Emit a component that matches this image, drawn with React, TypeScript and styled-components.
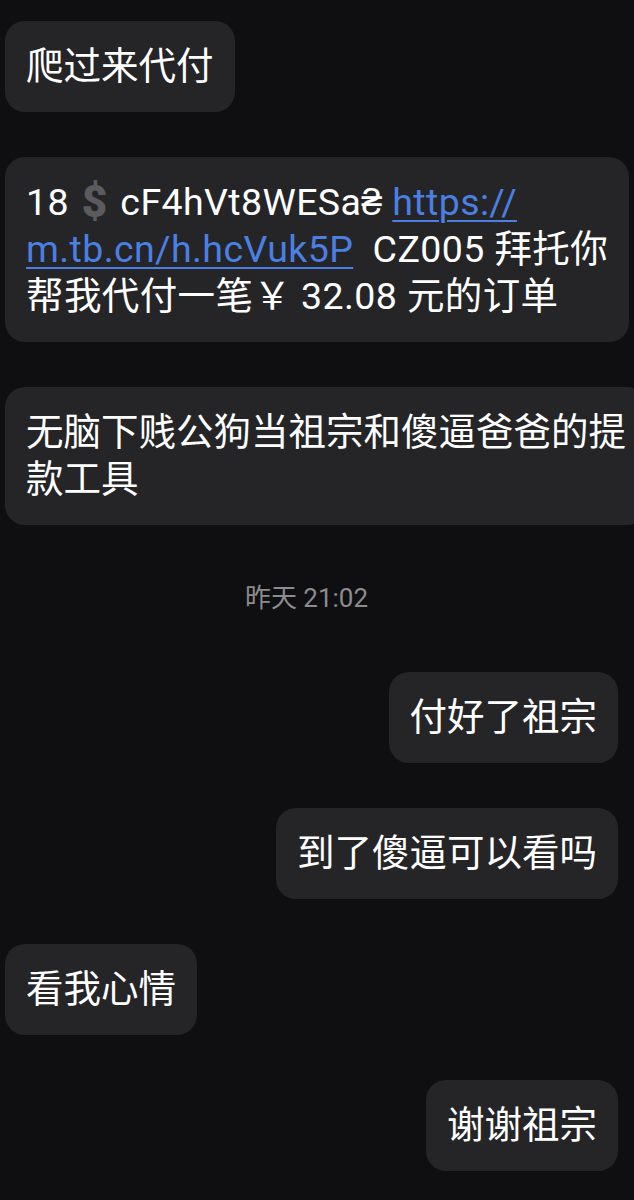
import React from "react";
import styled, { createGlobalStyle } from "styled-components";

const Global = createGlobalStyle`
  html, body {
    margin: 0;
    padding: 0;
    background: #0f0f11;
    overflow-x: hidden;
  }
  body {
    font-family: "Roboto", "Noto Sans CJK SC", sans-serif;
  }
`;

const Screen = styled.div`
  min-height: 1200px;
  background: #0f0f11;
  display: flex;
  flex-direction: column;
  gap: 45px;
  padding: 21px 16px 0 5px;
  box-sizing: border-box;
  overflow: hidden;
`;

const Bubble = styled.div<{ $mine?: boolean; $spaced?: boolean }>`
  align-self: ${(p) => (p.$mine ? "flex-end" : "flex-start")};
  background: #252527;
  color: #ffffff;
  border-radius: 20px;
  padding: 22px 21px;
  font-family: "Roboto", "Noto Sans CJK SC", sans-serif;
  font-size: 37.5px;
  line-height: 47px;
  letter-spacing: ${(p) => (p.$spaced ? "0.4px" : "0")};
  white-space: nowrap;
  flex-shrink: 0;
`;

const Timestamp = styled.div`
  align-self: center;
  margin: 13px 0 14px 0;
  padding-right: 10px;
  color: #8b8b90;
  font-family: "Roboto", "Noto Sans CJK SC", sans-serif;
  font-size: 26px;
  line-height: 30px;
`;

const Dollar = styled.span`
  display: inline-block;
  width: 32px;
  text-align: center;
  color: #5b5b5f;
  font-weight: 900;
  font-size: 44px;
  line-height: 40px;
  vertical-align: -2px;
`;

const Link = styled.span`
  color: #4a7fe3;
  text-decoration: underline;
  text-decoration-thickness: 2px;
  text-underline-offset: 5px;
`;

export default function App() {
  return (
    <>
      <Global />
      <Screen>
        <Bubble>爬过来代付</Bubble>
        <Bubble $spaced>
          18 <Dollar>$</Dollar> cF4hVt8WESa₴ <Link>https://</Link>
          <br />
          <Link>m.tb.cn/h.hcVuk5P</Link>&nbsp; CZ005 拜托你
          <br />
          帮我代付一笔￥ 32.08 元的订单
        </Bubble>
        <Bubble>
          无脑下贱公狗当祖宗和傻逼爸爸的提
          <br />
          款工具
        </Bubble>
        <Timestamp>昨天 21:02</Timestamp>
        <Bubble $mine>付好了祖宗</Bubble>
        <Bubble $mine>到了傻逼可以看吗</Bubble>
        <Bubble>看我心情</Bubble>
        <Bubble $mine>谢谢祖宗</Bubble>
      </Screen>
    </>
  );
}
